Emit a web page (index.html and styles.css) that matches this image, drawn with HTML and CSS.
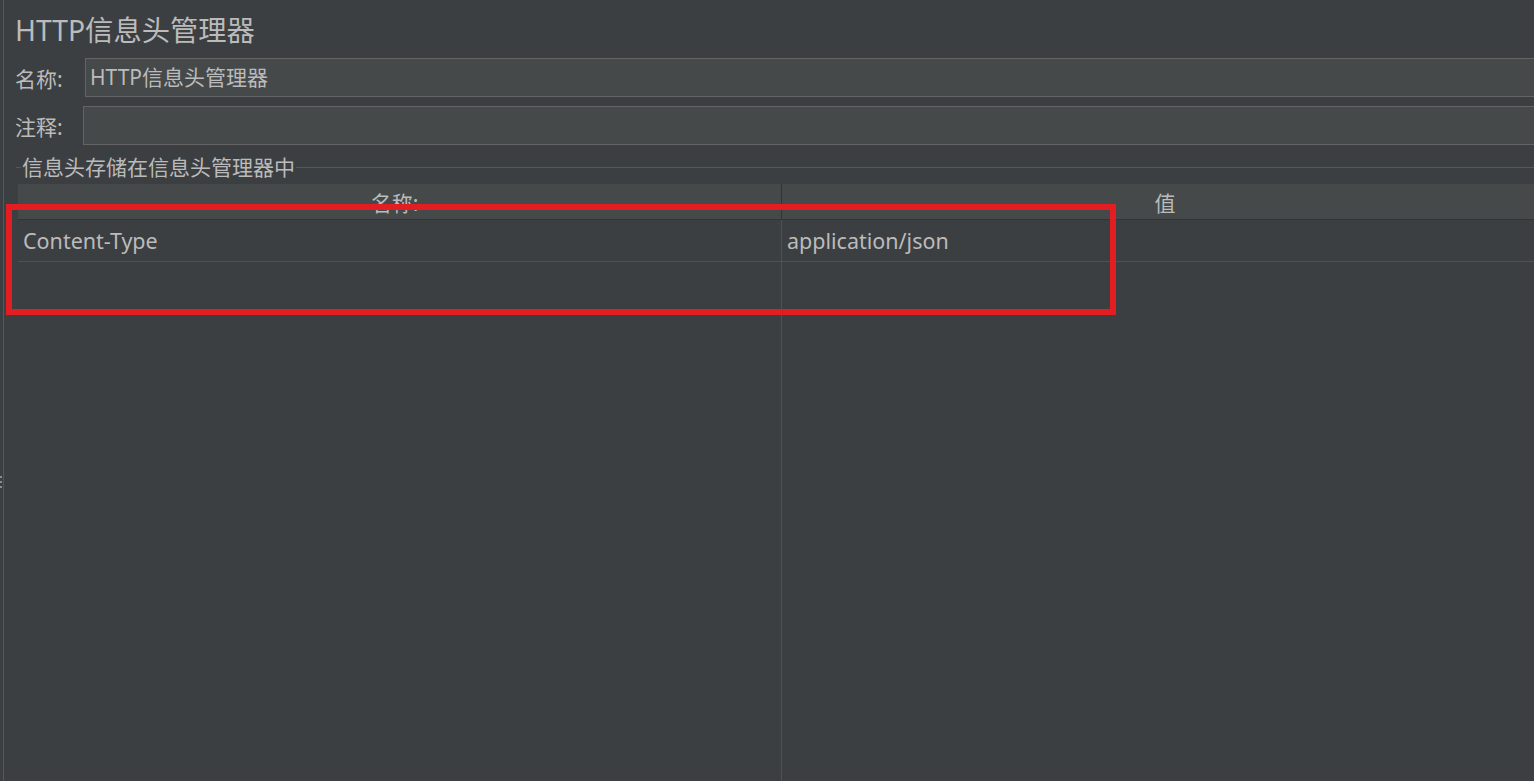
FILE: index.html
```html
<!DOCTYPE html>
<html lang="zh">
<head>
<meta charset="utf-8">
<title>HTTP信息头管理器</title>
<link rel="stylesheet" href="styles.css">
</head>
<body>
<div class="app">
  <div class="splitter">
    <div class="grip"><span></span><span></span><span></span></div>
  </div>
  <div class="panel">
    <h1 class="title">HTTP信息头管理器</h1>
    <div class="form-row">
      <label class="label">名称:</label>
      <div class="field">HTTP信息头管理器</div>
    </div>
    <div class="form-row second">
      <label class="label">注释:</label>
      <div class="field"></div>
    </div>
    <div class="group">
      <div class="group-title"><span class="tick"></span><span class="group-text">信息头存储在信息头管理器中</span><span class="group-line"></span></div>
      <div class="table">
        <div class="thead">
          <div class="th col1">名称:</div>
          <div class="th col2">值</div>
        </div>
        <div class="tbody">
          <div class="tr">
            <div class="td col1">Content-Type</div>
            <div class="td col2">application/json</div>
          </div>
          <div class="filler">
            <div class="fcol col1"></div>
            <div class="fcol col2"></div>
          </div>
        </div>
      </div>
    </div>
  </div>
  <div class="highlight"></div>
</div>
</body>
</html>
```
FILE: styles.css
```css
html, body {
  margin: 0;
  padding: 0;
  background: #3c3f41;
  height: 781px;
  overflow: hidden;
}
body {
  font-family: "Noto Sans", "Noto Sans CJK SC", sans-serif;
  color: #bbbbbb;
}
.app {
  position: relative;
  display: flex;
  height: 781px;
}
.splitter {
  width: 3px;
  border-right: 1px solid #55585a;
  display: flex;
  align-items: center;
}
.grip {
  display: flex;
  flex-direction: column;
  gap: 3px;
  margin-top: 182px;
}
.grip span {
  display: block;
  width: 2px;
  height: 2px;
  background: #8a8d8f;
}
.panel {
  flex: 1;
  display: flex;
  flex-direction: column;
  min-width: 0;
}
.title {
  margin: 0;
  padding: 11px 0 0 11px;
  font-size: 28.3px;
  font-weight: normal;
  line-height: 38px;
  height: 47px;
}
.form-row {
  display: flex;
  align-items: center;
  height: 39px;
  padding-left: 11px;
}
.form-row.second {
  margin-top: 9px;
}
.label {
  font-size: 21px;
  width: 70px;
  flex: none;
}
.form-row.second .label {
  width: 68px;
}
.field {
  flex: 1;
  height: 37px;
  border: 1px solid #646464;
  border-right: none;
  background: #45494a;
  font-size: 21px;
  line-height: 37px;
  padding-left: 4px;
  box-sizing: content-box;
}
.group {
  flex: 1;
  display: flex;
  flex-direction: column;
  padding-left: 12px;
  margin-top: 11px;
  min-height: 0;
}
.group-title {
  display: flex;
  align-items: center;
  height: 22px;
  font-size: 21px;
}
.tick {
  width: 5px;
  height: 1px;
  background: #55585a;
}
.group-text {
  padding: 0 1px;
  line-height: 22px;
}
.group-line {
  flex: 1;
  height: 1px;
  background: #55585a;
}
.table {
  flex: 1;
  display: flex;
  flex-direction: column;
  margin-top: 6px;
  margin-left: 2px;
  min-height: 0;
}
.thead {
  display: flex;
  height: 35px;
  background: #45494a;
  border-bottom: 1px solid #323435;
  font-size: 21px;
}
.th {
  display: flex;
  align-items: center;
  justify-content: center;
  line-height: 35px;
  padding-top: 4px;
  box-sizing: border-box;
}
.th.col1 {
  padding-right: 10px;
}
.th.col2 {
  padding-left: 14px;
}
.col1 {
  width: 764px;
  flex: none;
  box-sizing: border-box;
  border-right: 1px solid #323435;
}
.col2 {
  flex: 1;
}
.tbody {
  flex: 1;
  display: flex;
  flex-direction: column;
}
.tr {
  display: flex;
  height: 41px;
  border-bottom: 1px solid #4e5254;
}
.td {
  font-size: 21.5px;
  line-height: 41px;
  padding-left: 5px;
}
.tr .col1, .filler .col1 {
  border-right: 1px solid #4e5254;
}
.filler {
  flex: 1;
  display: flex;
}
.highlight {
  position: absolute;
  left: 6px;
  top: 204px;
  width: 1098px;
  height: 99px;
  border: 6px solid #e21e22;
}
```
